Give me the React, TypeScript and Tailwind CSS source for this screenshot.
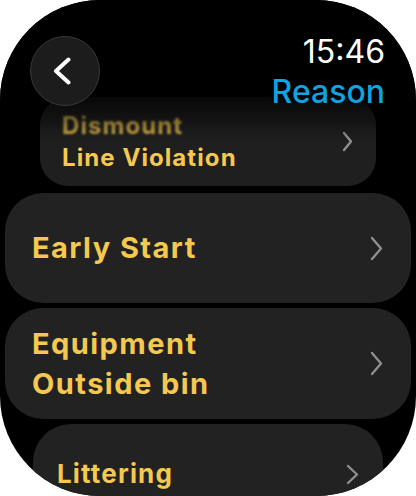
import React from 'react';

const font = { fontFamily: 'Inter, "Noto Sans", sans-serif' };

function Chevron({ w, h, className = '' }: { w: number; h: number; className?: string }) {
  return (
    <svg width={w} height={h} viewBox={`0 0 ${w} ${h}`} fill="none" className={className}>
      <path
        d={`M2 2 L${w - 2} ${h / 2} L2 ${h - 2}`}
        stroke="#8e8e93"
        strokeWidth={2.4}
        strokeLinecap="round"
        strokeLinejoin="round"
      />
    </svg>
  );
}

export default function App() {
  return (
    <div className="w-[416px] h-[496px] bg-white overflow-hidden" style={font}>
      <div className="relative w-full h-full bg-black rounded-[100px] overflow-hidden">
        {/* list */}
        <div className="flex flex-col pt-[97px]">
          <div className="mx-[40px] h-[89px] rounded-[28px] bg-[#1f1f1f] flex items-center justify-between pl-[22px] pr-[23px]">
            <div className="text-[24px] leading-[32px] font-bold tracking-[0.045em] text-[#f5c94f]">
              <div className="blur-[1px] opacity-85">Dismount</div>
              <div>Line Violation</div>
            </div>
            <Chevron w={11} h={21} />
          </div>

          <div className="mx-[5px] mt-[7px] h-[110px] rounded-[38px] bg-[#222222] flex items-center justify-between pl-[27px] pr-[28px]">
            <div className="text-[29px] leading-[40px] font-bold tracking-[0.05em] text-[#f5c94f]">Early Start</div>
            <Chevron w={13} h={25} />
          </div>

          <div className="mx-[5px] mt-[5px] h-[111px] rounded-[38px] bg-[#222222] flex items-center justify-between pl-[27px] pr-[28px]">
            <div className="text-[29px] leading-[40px] font-bold tracking-[0.05em] text-[#f5c94f]">
              <div>Equipment</div>
              <div>Outside bin</div>
            </div>
            <Chevron w={13} h={25} />
          </div>

          <div className="mx-[33px] mt-[5px] h-[100px] rounded-[38px] bg-[#222222] flex items-center justify-between pl-[24px] pr-[24px]">
            <div className="text-[26px] leading-[40px] font-bold tracking-[0.045em] text-[#f5c94f]">Littering</div>
            <Chevron w={13} h={21} />
          </div>
        </div>

        {/* header overlay */}
        <div className="absolute inset-x-0 top-0 h-[140px] pointer-events-none bg-[linear-gradient(to_bottom,#000_0px,#000_88px,rgba(0,0,0,0.72)_99px,rgba(0,0,0,0.35)_122px,rgba(0,0,0,0)_140px)]" />
        <div className="absolute inset-x-0 top-0 flex justify-between pl-[30px] pr-[31px]">
          <div className="mt-[36px] w-[70px] h-[70px] rounded-full bg-[#1c1c1c] border border-[#3a3a3a] flex items-center justify-center">
            <svg width="18" height="28" viewBox="0 0 18 28" fill="none" className="-ml-[6px]">
              <path d="M15.5 2.5 L3 14 L15.5 25.5" stroke="#fff" strokeWidth={4} strokeLinecap="round" strokeLinejoin="round" />
            </svg>
          </div>
          <div className="pt-[32px] text-right text-[32px] leading-[40px]">
            <div className="text-white font-normal">15:46</div>
            <div className="text-[#0fa3e0] font-medium">Reason</div>
          </div>
        </div>
      </div>
    </div>
  );
}
